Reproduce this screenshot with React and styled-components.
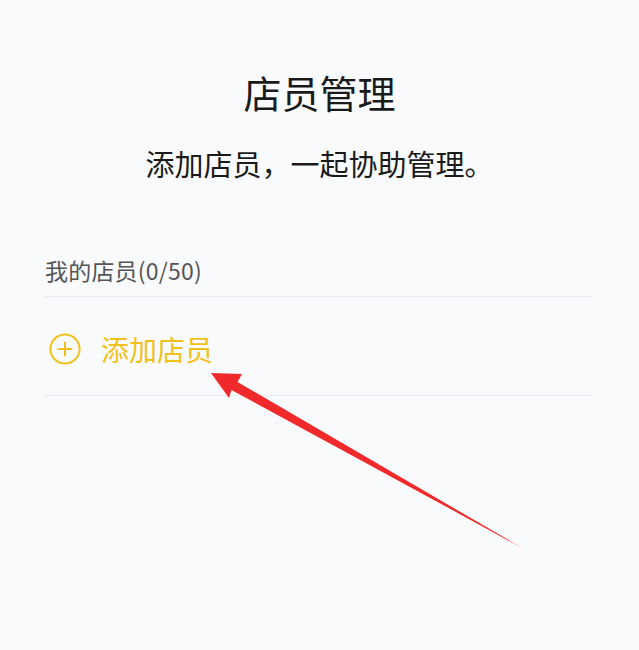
import React from "react";
import styled, { createGlobalStyle } from "styled-components";

const GlobalStyle = createGlobalStyle`
    html, body {
        margin: 0;
        padding: 0;
        background: #f9fafc;
    }
    body {
        font-family: "Noto Sans CJK SC", "Noto Sans", sans-serif;
    }
`;

//---styled-------------------------------------------
const Page = styled.div`
    position: relative;
    width: 639px;
    height: 650px;
    padding-top: 69px;
    box-sizing: border-box;
    background: #f9fafc;
    overflow: hidden;
`;

const Title = styled.h1`
    margin: 0;
    text-align: center;
    font-size: 38px;
    line-height: 46px;
    font-weight: 400;
    color: #1a1a1a;
`;

const SubTitle = styled.p`
    margin: 30px 0 0;
    text-align: center;
    font-size: 29px;
    line-height: 36px;
    font-weight: 400;
    color: #1a1a1a;
`;

const Section = styled.div`
    margin-top: 74px;
    padding: 0 47px 0 44px;
`;

const Label = styled.div`
    padding: 0 0 11px 1px;
    font-size: 23px;
    line-height: 30px;
    letter-spacing: 0.2px;
    color: #555558;
    border-bottom: 1px solid #e8ebf1;
`;

const AddRow = styled.div`
    display: flex;
    align-items: center;
    gap: 20px;
    padding: 35px 0 29px 5px;
    border-bottom: 1px solid #e8ebf1;
    cursor: pointer;
`;

const AddText = styled.span`
    font-size: 28px;
    line-height: 34px;
    color: ${(p) => p.color};
`;

const Overlay = styled.svg`
    position: absolute;
    inset: 0;
    pointer-events: none;
`;

//---
const YELLOW = "#f1c11a";

const PlusCircle = () => (
    <svg width="32" height="32" viewBox="0 0 32 32">
        <circle cx="16" cy="16" r="14.6" fill="none" stroke={YELLOW} strokeWidth="2" />
        <path d="M16 9.5v13M9.5 16h13" stroke={YELLOW} strokeWidth="2" strokeLinecap="round" />
    </svg>
);

const App = () => {
    return (
        <Page>
            <GlobalStyle />
            <Title>店员管理</Title>
            <SubTitle>添加店员，一起协助管理。</SubTitle>
            <Section>
                <Label>我的店员(0/50)</Label>
                <AddRow>
                    <PlusCircle />
                    <AddText color={YELLOW}>添加店员</AddText>
                </AddRow>
            </Section>
            {/* red annotation arrow */}
            <Overlay width="639" height="650" viewBox="0 0 639 650">
                <polygon
                    points="211,373 242,374 237.5,382 524,549 231.5,390 229,398"
                    fill="#f02a2a"
                />
            </Overlay>
        </Page>
    );
};

export default App;
